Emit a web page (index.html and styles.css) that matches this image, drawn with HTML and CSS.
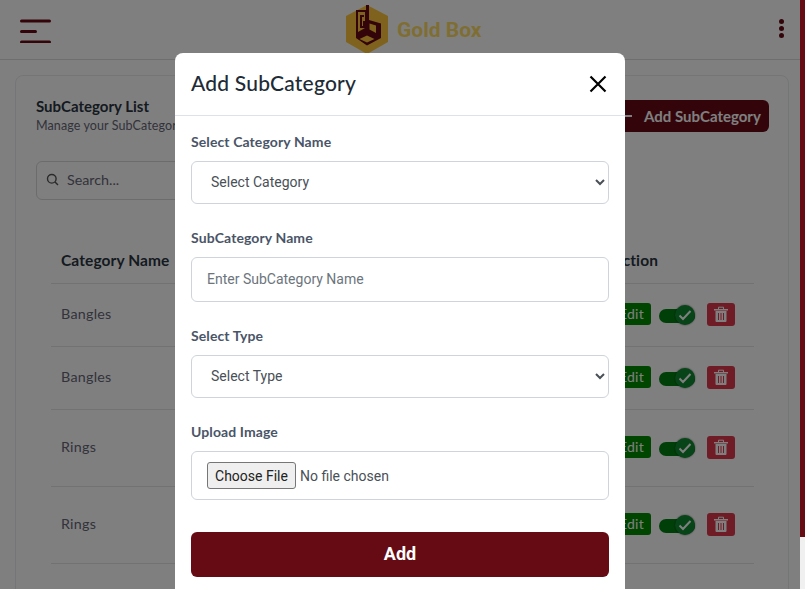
FILE: index.html
```html
<!DOCTYPE html>
<html lang="en">
<head>
<meta charset="utf-8">
<title>SubCategory</title>
<link rel="stylesheet" href="styles.css">
</head>
<body>
<div class="page">
  <header class="topbar">
    <button class="icon-btn" aria-label="Menu">
      <svg width="32" height="24" viewBox="0 0 32 24"><path d="M2.500 2h28M2.500 12.500h14M2.500 23h28" stroke="#660a14" stroke-width="3" stroke-linecap="round" fill="none"/></svg>
    </button>
    <div class="brand">
      <svg width="44" height="50" viewBox="0 0 44 50">
        <path d="M22 0 43 11V37L22 49 1 37V11Z" fill="#ffc53a"/>
        <path d="M11 5h9v2h-7v20l7-4V5h1V0h3v15l12 3.500V33l-14 7.500L11 33 11 5ZM15 10h4v2h-2v9h1v-5h2v7h-5ZM24.500 18.500v6l6.500 3.500v-7.500ZM22 30.500 14.500 34l7.500 3.500L29.500 34Z" fill="#660a14" fill-rule="evenodd"/>
      </svg>
      <span class="brand-name">Gold Box</span>
    </div>
    <div class="dots" aria-label="More"><i></i><i></i><i></i></div>
  </header>
  <main class="content">
    <section class="card">
      <div class="card-head">
        <div>
          <h2 class="card-title">SubCategory List</h2>
          <p class="card-sub">Manage your SubCategories</p>
        </div>
        <button class="add-btn"><span class="add-plus"></span>Add SubCategory</button>
      </div>
      <div class="search">
        <svg width="13" height="13" viewBox="0 0 13 13"><circle cx="5.800" cy="5.800" r="4.300" fill="none" stroke="#555" stroke-width="1.400"/><path d="M9 9l3 3" stroke="#555" stroke-width="1.400"/></svg>
        <span>Search...</span>
      </div>
      <div class="table">
        <div class="row row-head"><span>Category Name</span><span class="action-title">Action</span></div>
        <div class="row row-a"><span>Bangles</span>
          <div class="actions"><span class="edit">Edit</span><span class="toggle"><b><svg width="14" height="12" viewBox="0 0 14 12"><path d="M1.500 6.500 5 10l7.500-8" fill="none" stroke="#fff" stroke-width="2"/></svg></b></span><span class="del"><svg width="14" height="16" viewBox="0 0 14 16"><path d="M0 3h14v1.500H0zM1.500 5h11v10a1 1 0 0 1-1 1h-9a1 1 0 0 1-1-1z" fill="#fff"/><path d="M4.500 7v7M7 7v7M9.500 7v7" stroke="#e0384c" stroke-width="1"/><path d="M4.500 3V1.200h5V3" stroke="#fff" fill="none"/></svg></span></div>
        </div>
        <div class="row row-a"><span>Bangles</span>
          <div class="actions"><span class="edit">Edit</span><span class="toggle"><b><svg width="14" height="12" viewBox="0 0 14 12"><path d="M1.500 6.500 5 10l7.500-8" fill="none" stroke="#fff" stroke-width="2"/></svg></b></span><span class="del"><svg width="14" height="16" viewBox="0 0 14 16"><path d="M0 3h14v1.500H0zM1.500 5h11v10a1 1 0 0 1-1 1h-9a1 1 0 0 1-1-1z" fill="#fff"/><path d="M4.500 7v7M7 7v7M9.500 7v7" stroke="#e0384c" stroke-width="1"/><path d="M4.500 3V1.200h5V3" stroke="#fff" fill="none"/></svg></span></div>
        </div>
        <div class="row row-b"><span>Rings</span>
          <div class="actions"><span class="edit">Edit</span><span class="toggle"><b><svg width="14" height="12" viewBox="0 0 14 12"><path d="M1.500 6.500 5 10l7.500-8" fill="none" stroke="#fff" stroke-width="2"/></svg></b></span><span class="del"><svg width="14" height="16" viewBox="0 0 14 16"><path d="M0 3h14v1.500H0zM1.500 5h11v10a1 1 0 0 1-1 1h-9a1 1 0 0 1-1-1z" fill="#fff"/><path d="M4.500 7v7M7 7v7M9.500 7v7" stroke="#e0384c" stroke-width="1"/><path d="M4.500 3V1.200h5V3" stroke="#fff" fill="none"/></svg></span></div>
        </div>
        <div class="row row-b"><span>Rings</span>
          <div class="actions"><span class="edit">Edit</span><span class="toggle"><b><svg width="14" height="12" viewBox="0 0 14 12"><path d="M1.500 6.500 5 10l7.500-8" fill="none" stroke="#fff" stroke-width="2"/></svg></b></span><span class="del"><svg width="14" height="16" viewBox="0 0 14 16"><path d="M0 3h14v1.500H0zM1.500 5h11v10a1 1 0 0 1-1 1h-9a1 1 0 0 1-1-1z" fill="#fff"/><path d="M4.500 7v7M7 7v7M9.500 7v7" stroke="#e0384c" stroke-width="1"/><path d="M4.500 3V1.200h5V3" stroke="#fff" fill="none"/></svg></span></div>
        </div>
      </div>
    </section>
  </main>
  <div class="backdrop"></div>
  <div class="modal">
    <div class="modal-head">
      <h1 class="modal-title">Add SubCategory</h1>
      <button class="close" aria-label="Close"><svg width="18" height="18" viewBox="0 0 18 18"><path d="M1.500 1.500l15 15M16.500 1.500l-15 15" stroke="#000" stroke-width="2.200" fill="none"/></svg></button>
    </div>
    <form class="modal-body">
      <div class="field">
        <label class="label">Select Category Name</label>
        <select class="control select"><option>Select Category</option></select>
      </div>
      <div class="field">
        <label class="label">SubCategory Name</label>
        <input class="control text" type="text" placeholder="Enter SubCategory Name">
      </div>
      <div class="field">
        <label class="label">Select Type</label>
        <select class="control select"><option>Select Type</option></select>
      </div>
      <div class="field">
        <label class="label">Upload Image</label>
        <input class="control file" type="file">
      </div>
      <button type="button" class="submit">Add</button>
    </form>
  </div>
</div>
<div class="edge"><div class="edge-fill"></div></div>
</body>
</html>
```
FILE: styles.css
```css
* { box-sizing: border-box; }
html, body { height: 100%; overflow: hidden; }
body {
  margin: 0;
  display: flex;
  background: #f0f0f0;
  font-family: "Lato", "Noto Sans", sans-serif;
  color: #212b36;
}
.page {
  position: relative;
  width: 800px;
  height: 589px;
  overflow: hidden;
  background: #fff;
  flex: none;
}
.edge { flex: 1; }
.edge-fill { height: 537px; background: #660a14; }

.topbar {
  height: 60px;
  border-bottom: 1px solid #ddd;
  display: flex;
  align-items: center;
  justify-content: space-between;
  padding: 0 16px 0 19px;
  position: relative;
}
.icon-btn { border: 0; background: none; padding: 0; display: flex; margin-top: 2px; }
.brand {
  position: absolute;
  left: 345px;
  top: 5px;
  display: flex;
  align-items: flex-start;
  gap: 8px;
}
.brand-name {
  font: 700 21px/25px "Roboto", sans-serif;
  color: #ffdd66;
  margin-top: 13px;
}
.dots { display: flex; flex-direction: column; gap: 2px; margin-top: -2px; }
.dots i { width: 5px; height: 5px; border-radius: 50%; background: #660a14; display: block; }

.content { padding: 15px 11px 0 15px; }
.card {
  border: 1px solid #e8ebed;
  border-radius: 8px;
  padding: 20px;
  height: 600px;
}
.card-head { display: flex; justify-content: space-between; align-items: flex-start; }
.card-title { margin: 0; font-size: 15px; line-height: 20px; font-weight: 700; color: #2b3542; }
.card-sub { margin: 2px 0 0; font-size: 12.500px; line-height: 16px; letter-spacing: .1px; color: #667; white-space: nowrap; }
.add-btn {
  margin-top: 4px;
  height: 32px;
  width: 164px;
  border: 0;
  border-radius: 6px;
  background: #660a14;
  color: #fff;
  font: 700 15px "Lato", sans-serif;
  display: flex;
  align-items: center;
  padding: 0 8px 0 17px;
  gap: 12px;
  margin-right: -1px;
  white-space: nowrap;
}
.add-plus { width: 10px; height: 2px; background: #fff; flex: none; }
.search {
  margin-top: 27px;
  width: 200px;
  height: 39px;
  border: 1px solid #d8d8d8;
  border-radius: 6px;
  display: flex;
  align-items: center;
  gap: 8px;
  padding: 0 9px 2px;
  font-size: 14.300px;
  color: #667;
}
.table { margin: 40px 14px 0 15px; }
.row {
  display: flex;
  justify-content: space-between;
  align-items: center;
  border-bottom: 1px solid #e5e5e5;
  padding: 0 19px 3px 10px;
  font-size: 14.300px;
  letter-spacing: .25px;
  color: #667;
}
.row-head { height: 44px; font-size: 15.500px; letter-spacing: .1px; font-weight: 700; color: #2b3542; }
.action-title { width: 123px; }
.row-a { height: 63px; }
.row-b { height: 77px; }
.actions { display: flex; align-items: center; width: 125px; margin-top: 1px; }
.edit {
  width: 41px;
  height: 22px;
  border-radius: 3px;
  background: #008c00;
  color: #fff;
  font-size: 14px;
  line-height: 22px;
  text-align: right;
  padding-right: 7px;
  flex: none;
}
.toggle {
  margin-left: 8px;
  width: 36px;
  height: 14px;
  border-radius: 7px;
  background: #008010;
  position: relative;
  flex: none;
  top: 2px;
}
.toggle b {
  position: absolute;
  right: 0;
  top: -4px;
  width: 20px;
  height: 20px;
  border-radius: 50%;
  background: #0e8a30;
  box-shadow: 0 0 2px rgba(0,0,0,.6);
  display: flex;
  align-items: center;
  justify-content: center;
}
.del {
  margin-left: 12px;
  width: 28px;
  height: 23px;
  border-radius: 3px;
  background: #e0384c;
  display: flex;
  align-items: center;
  justify-content: center;
  flex: none;
}

.backdrop { position: absolute; inset: 0; background: rgba(0,0,0,.5); }
.modal {
  position: absolute;
  left: 175px;
  top: 53px;
  width: 450px;
  height: 560px;
  background: #fff;
  border-radius: 8px;
}
.modal-head {
  height: 63px;
  border-bottom: 1px solid #dee2e6;
  display: flex;
  align-items: center;
  justify-content: space-between;
  padding: 0 18px 3px 16px;
}
.modal-title { margin: 0; font-size: 21px; letter-spacing: .2px; font-weight: 500; color: #212b36; line-height: 24px; }
.close { border: 0; background: none; padding: 0; display: flex; margin-top: 2px; }
.modal-body { padding: 16px 16px 0; }
.field { margin-bottom: 24px; }
.label {
  display: block;
  font-size: 14px;
  letter-spacing: .1px;
  line-height: 20px;
  font-weight: 700;
  color: #4a5568;
  margin-bottom: 9px;
}
.control {
  display: block;
  width: 100%;
  border: 1px solid #ced4da;
  border-radius: 6px;
  background: #fff;
  font: 400 14px "Roboto", sans-serif;
  color: #495057;
}
.select { height: 43px; padding: 0 15px 2px; }
.text { height: 45px; padding: 0 15px 2px; }
.text::placeholder { color: #6c757d; opacity: 1; }
.file { height: 49px; padding: 10px 15px; }
.file::file-selector-button {
  font: 400 14px "Roboto", sans-serif;
  color: #222;
  height: 27px;
  width: 89px;
  margin-right: 4px;
  border: 1px solid #767676;
  border-radius: 3px;
  background: #efefef;
}
.submit {
  display: block;
  width: 100%;
  height: 45px;
  margin-top: 32px;
  padding-bottom: 3px;
  border: 0;
  border-radius: 6px;
  background: #660a14;
  color: #fff;
  font: 700 18px "Roboto", sans-serif;
}
```
